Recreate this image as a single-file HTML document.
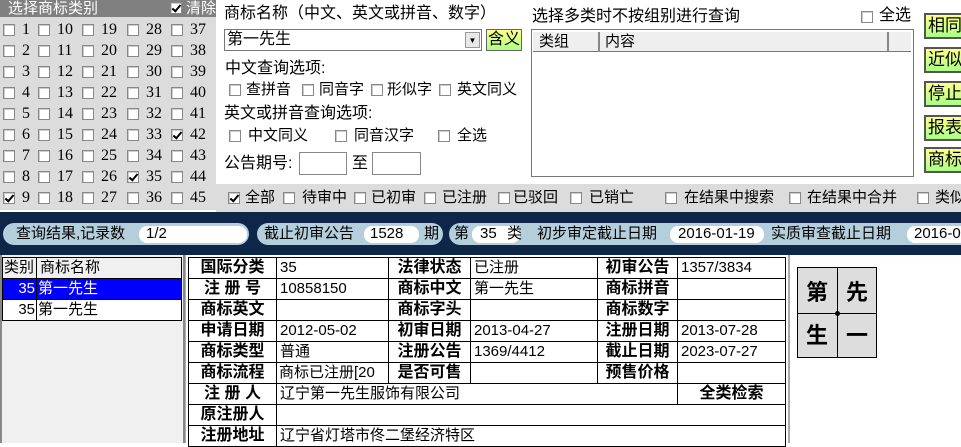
<!DOCTYPE html>
<html><head><meta charset="utf-8"><style>
*{margin:0;padding:0;box-sizing:border-box}
body{width:961px;height:443px;overflow:hidden;background:#fff;font-family:"Liberation Sans","WenQuanYi Zen Hei","Noto Sans CJK SC",sans-serif;font-size:15px;color:#000;position:relative}
.a{position:absolute;white-space:nowrap;line-height:16px}
.cb{position:absolute;width:12px;height:12px;border:1px solid #888;background:#fff;box-shadow:inset 1px 1px 0 #ccc}
.cb.k::after{content:"";position:absolute;left:3px;top:0px;width:3px;height:7px;border:solid #000;border-width:0 2px 2px 0;transform:rotate(40deg)}
.btn{position:absolute;left:924px;width:40px;height:26px;border:2px solid #555;background:linear-gradient(#ffff88,#aaff88);font-size:17px;line-height:22px;padding-left:2px}
.pill{position:absolute;top:223px;height:22px;background:#b4cedc;border-radius:11px}
.wp{position:absolute;top:226px;height:17px;background:#fff;border-radius:8px}
table{border-collapse:collapse;position:absolute}
td{border:1px solid #000;height:21px;line-height:18px;padding:0 3px;white-space:nowrap;overflow:hidden;font-size:15px}
td.l{font-weight:bold;text-align:center;font-size:16px}
</style></head><body>
<!-- left panel -->
<div class="a" style="left:0;top:0;width:216px;height:210px;background:#dcdcdc"></div>
<div class="a" style="left:0;top:0;width:216px;height:17px;background:#808080;color:#fff;font-size:15px;line-height:17px;padding-left:8px">选择商标类别</div>
<div class="cb k" style="left:170px;top:2px"></div>
<div class="a" style="left:186px;top:0;color:#fff;font-size:15px;line-height:17px">清除</div>
<div id="grid"></div>
<!-- middle -->
<div class="a" style="left:224px;top:6px;font-size:16px">商标名称（中文、英文或拼音、数字）</div>
<div class="a" style="left:224px;top:29px;width:258px;height:22px;border:1px solid #777;background:#fff;font-size:16px;line-height:20px;padding-left:2px">第一先生</div>
<div class="a" style="left:465px;top:32px;width:15px;height:16px;background:#e8e8e8;border:1px solid #999;font-size:8px;text-align:center">▼</div>
<div class="a" style="left:486px;top:29px;width:36px;height:22px;border:1px solid #666;background:linear-gradient(#ffff88,#aaff88);font-size:16px;line-height:20px;text-align:center">含义</div>
<div class="a" style="left:225px;top:61px;font-size:16px">中文查询选项:</div>
<div class="cb" style="left:229px;top:84px"></div><div class="a" style="left:246px;top:82px">查拼音</div>
<div class="cb" style="left:302px;top:84px"></div><div class="a" style="left:319px;top:82px">同音字</div>
<div class="cb" style="left:371px;top:84px"></div><div class="a" style="left:387px;top:82px">形似字</div>
<div class="cb" style="left:439px;top:84px"></div><div class="a" style="left:457px;top:82px">英文同义</div>
<div class="a" style="left:224px;top:106px;font-size:16px">英文或拼音查询选项:</div>
<div class="cb" style="left:229px;top:130px"></div><div class="a" style="left:248px;top:128px">中文同义</div>
<div class="cb" style="left:335px;top:130px"></div><div class="a" style="left:354px;top:128px">同音汉字</div>
<div class="cb" style="left:438px;top:130px"></div><div class="a" style="left:457px;top:128px">全选</div>
<div class="a" style="left:224px;top:156px;font-size:16px">公告期号:</div>
<div class="a" style="left:299px;top:152px;width:48px;height:23px;border:1px solid #888;background:#fff"></div>
<div class="a" style="left:352px;top:156px;font-size:16px">至</div>
<div class="a" style="left:372px;top:152px;width:49px;height:23px;border:1px solid #888;background:#fff"></div>
<!-- right -->
<div class="a" style="left:532px;top:9px;font-size:16px">选择多类时不按组别进行查询</div>
<div class="cb" style="left:861px;top:11px"></div><div class="a" style="left:879px;top:8px;font-size:16px">全选</div>
<div class="a" style="left:531px;top:29px;width:383px;height:148px;border:1px solid #777;background:#fff"></div>
<div class="a" style="left:533px;top:32px;width:378px;height:20px;background:#efefef;border-bottom:1px solid #777"></div>
<div class="a" style="left:598px;top:32px;width:2px;height:20px;background:#888"></div>
<div class="a" style="left:887px;top:32px;width:2px;height:20px;background:#888"></div>
<div class="a" style="left:539px;top:34px">类组</div>
<div class="a" style="left:605px;top:34px">内容</div>
<div class="btn" style="top:13px">相同</div>
<div class="btn" style="top:47px">近似</div>
<div class="btn" style="top:81px">停止</div>
<div class="btn" style="top:115px">报表</div>
<div class="btn" style="top:147px">商标</div>
<!-- bottom check row -->
<div class="a" style="left:216px;top:184px;width:745px;height:28px;background:#dcdcdc"></div>
<div class="cb k" style="left:228px;top:192px"></div><div class="a" style="left:245px;top:190px">全部</div>
<div class="cb" style="left:283px;top:192px"></div><div class="a" style="left:302px;top:190px">待审中</div>
<div class="cb" style="left:354px;top:192px"></div><div class="a" style="left:371px;top:190px">已初审</div>
<div class="cb" style="left:424px;top:192px"></div><div class="a" style="left:442px;top:190px">已注册</div>
<div class="cb" style="left:498px;top:192px"></div><div class="a" style="left:513px;top:190px">已驳回</div>
<div class="cb" style="left:570px;top:192px"></div><div class="a" style="left:589px;top:190px">已销亡</div>
<div class="cb" style="left:665px;top:192px"></div><div class="a" style="left:684px;top:190px">在结果中搜索</div>
<div class="cb" style="left:789px;top:192px"></div><div class="a" style="left:807px;top:190px">在结果中合并</div>
<div class="cb" style="left:917px;top:192px"></div><div class="a" style="left:935px;top:190px">类似</div>
<!-- dark band -->
<div class="a" style="left:0;top:212px;width:961px;height:43px;background:#0e2648"></div>
<div class="pill" style="left:3px;width:246px"></div>
<div class="a" style="left:16px;top:226px">查询结果,记录数</div>
<div class="wp" style="left:139px;width:108px"></div><div class="a" style="left:146px;top:226px">1/2</div>
<div class="pill" style="left:257px;width:186px"></div>
<div class="a" style="left:264px;top:226px">截止初审公告</div>
<div class="wp" style="left:364px;width:55px"></div><div class="a" style="left:370px;top:226px">1528</div>
<div class="a" style="left:424px;top:226px">期</div>
<div class="pill" style="left:449px;width:530px"></div>
<div class="a" style="left:454px;top:226px">第</div>
<div class="wp" style="left:472px;width:48px"></div><div class="a" style="left:480px;top:226px">35</div>
<div class="a" style="left:507px;top:226px">类　初步审定截止日期</div>
<div class="wp" style="left:670px;width:94px"></div><div class="a" style="left:678px;top:226px">2016-01-19</div>
<div class="a" style="left:771px;top:226px">实质审查截止日期</div>
<div class="wp" style="left:907px;width:60px"></div><div class="a" style="left:914px;top:226px">2016-0</div>
<!-- left list -->
<div class="a" style="left:0;top:255px;width:185px;height:188px;background:#f0f0f0;border-left:2px solid #888;border-right:2px solid #888"></div>
<table style="left:2px;top:257px;width:180px">
<tr><td style="width:34px;padding:0 1px;background:#f0f0f0">类别</td><td style="background:#f0f0f0">商标名称</td></tr>
<tr style="background:#0000ff;color:#fff"><td style="text-align:right;padding:0 1px">35</td><td style="padding:0 1px">第一先生</td></tr>
<tr style="background:#fff"><td style="text-align:right;padding:0 1px">35</td><td style="padding:0 1px">第一先生</td></tr>
</table>
<div class="a" style="left:185px;top:255px;width:3px;height:188px;background:#fff;border-left:1px solid #aaa"></div>
<!-- info table -->
<table style="left:188px;top:257px;width:597px;table-layout:fixed">
<col style="width:88px"><col style="width:112px"><col style="width:82px"><col style="width:127px"><col style="width:80px"><col style="width:108px">
<tr><td class="l">国际分类</td><td>35</td><td class="l">法律状态</td><td>已注册</td><td class="l">初审公告</td><td>1357/3834</td></tr>
<tr><td class="l">注 册 号</td><td>10858150</td><td class="l">商标中文</td><td>第一先生</td><td class="l">商标拼音</td><td></td></tr>
<tr><td class="l">商标英文</td><td></td><td class="l">商标字头</td><td></td><td class="l">商标数字</td><td></td></tr>
<tr><td class="l">申请日期</td><td>2012-05-02</td><td class="l">初审日期</td><td>2013-04-27</td><td class="l">注册日期</td><td>2013-07-28</td></tr>
<tr><td class="l">商标类型</td><td>普通</td><td class="l">注册公告</td><td>1369/4412</td><td class="l">截止日期</td><td>2023-07-27</td></tr>
<tr><td class="l">商标流程</td><td style="padding:0 2px">商标已注册[20</td><td class="l">是否可售</td><td></td><td class="l">预售价格</td><td></td></tr>
<tr><td class="l">注 册 人</td><td colspan="4">辽宁第一先生服饰有限公司</td><td class="l">全类检索</td></tr>
<tr><td class="l">原注册人</td><td colspan="5"></td></tr>
<tr><td class="l">注册地址</td><td colspan="5">辽宁省灯塔市佟二堡经济特区</td></tr>
</table>
<div class="a" style="left:788px;top:255px;width:2px;height:188px;background:#aaa"></div>
<!-- image -->
<div class="a" style="left:797px;top:267px;width:80px;height:91px;border:1px solid #000;background:#ddd"></div>
<div class="a" style="left:837px;top:267px;width:1px;height:91px;background:#000"></div>
<div class="a" style="left:797px;top:313px;width:80px;height:1px;background:#000"></div>
<div class="a" style="left:835px;top:311px;width:5px;height:5px;border-radius:50%;background:#000"></div>
<div class="a" style="left:806px;top:281px;font-size:22px;line-height:24px;font-weight:bold">第</div>
<div class="a" style="left:846px;top:281px;font-size:22px;line-height:24px;font-weight:bold">先</div>
<div class="a" style="left:806px;top:324px;font-size:22px;line-height:24px;font-weight:bold">生</div>
<div class="a" style="left:846px;top:324px;font-size:22px;line-height:24px;font-weight:bold">一</div>
<script>
var g=document.getElementById('grid'),h='',cols=[3,38,82,127,171],chk={9:1,35:1,42:1};
for(var c=0;c<5;c++)for(var r=0;r<9;r++){var n=c*9+r+1,y=24+r*21,x=cols[c];
h+='<div class="cb'+(chk[n]?' k':'')+'" style="left:'+x+'px;top:'+(y)+'px"></div><div class="a" style="left:'+(x+19)+'px;top:'+(y-2)+'px;font-family:\'Liberation Serif\',serif;font-size:16px">'+n+'</div>';}
g.innerHTML=h;
</script>
</body></html>
